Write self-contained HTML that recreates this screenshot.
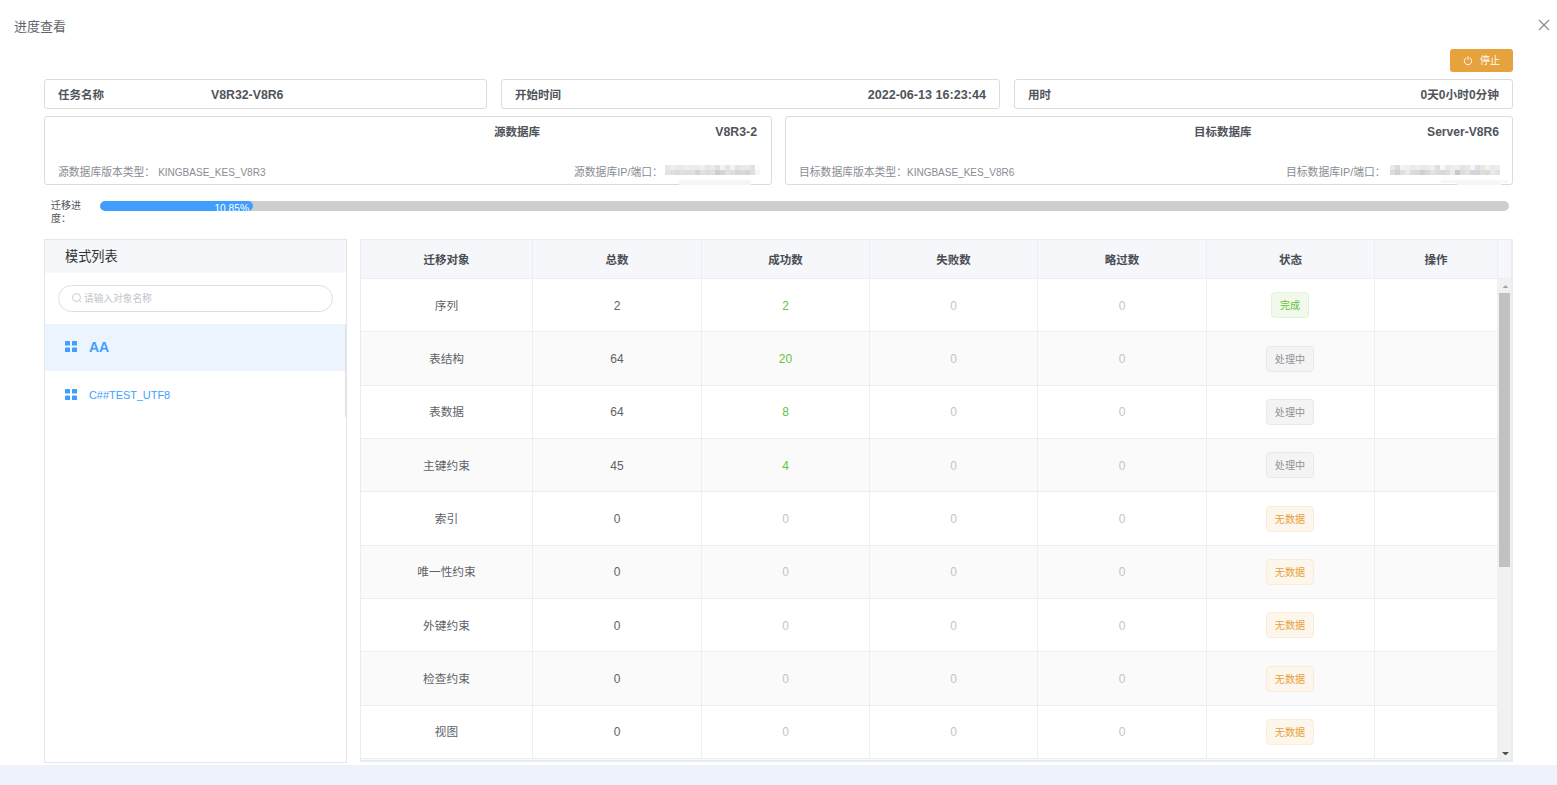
<!DOCTYPE html>
<html lang="zh-CN">
<head>
<meta charset="utf-8">
<title>进度查看</title>
<style>
*{box-sizing:border-box;margin:0;padding:0}
html,body{width:1557px;height:785px;overflow:hidden;background:#fff}
body{position:relative;font-family:"Liberation Sans","Noto Sans CJK SC",sans-serif;font-size:12px;color:#606266}
.abs{position:absolute}
.title{left:14px;top:17px;font-size:13px;line-height:19px;color:#62666c}
.close{left:1538px;top:19px;width:12px;height:12px}
.stop{left:1450px;top:49px;width:63px;height:23px;background:#e6a23c;border-radius:3px;color:#fff;font-size:10px;line-height:23px}
.stop svg{position:absolute;left:13.2px;top:6.8px}
.stop span{position:absolute;left:30px;top:0;font-size:10px;line-height:24px}
.box{border:1px solid #dcdcdc;border-radius:3px;background:#fff}
.b{font-weight:bold;color:#50545a}
.lbl{font-size:11.5px;line-height:16px;white-space:nowrap}
.val{font-size:11.7px;line-height:16px;white-space:nowrap}
.val i{font-style:normal;font-size:12.3px}
.sm{font-size:10.8px;line-height:14px;color:#888c92;white-space:nowrap}
.sm i{font-style:normal;font-size:10px}
.plabel{left:51px;top:199px;width:36px;font-size:10px;line-height:13px;color:#50545a}
.ptrack{left:100px;top:201px;width:1409px;height:10px;border-radius:5px;background:#cecece;overflow:hidden}
.pfill{position:absolute;left:0;top:0;width:153px;height:10px;border-radius:5px;background:#409eff;overflow:hidden}
.pfill span{position:absolute;right:4px;top:2px;font-size:10.2px;line-height:12px;color:#fff}
.panel{left:44px;top:239px;width:303px;height:524px;border:1px solid #e5e6e9;background:#fff}
.phead{position:absolute;left:0;top:0;width:301px;height:33px;background:#f5f7fa;font-size:13.2px;line-height:33px;padding-left:20px;color:#303133}
.search{position:absolute;left:13px;top:45px;width:275px;height:27px;border:1px solid #dcdfe6;border-radius:14px}
.search span{position:absolute;left:25px;top:6px;font-size:9.7px;line-height:14px;color:#c0c4cc}
.search svg{position:absolute;left:13px;top:7px}
.item{position:absolute;left:0;width:301px;height:47px;color:#409eff}
.item svg{position:absolute;left:20.4px;top:17px}
.item.i2 svg{top:18px}
.item span{position:absolute;left:44px;top:0;line-height:48px;white-space:nowrap;font-size:10.9px}
.item.on{background:#ecf5ff}
.item.on span{font-weight:bold;font-size:14px;line-height:47px}
.mborder{left:345px;top:324px;width:1px;height:93px;background:#e2e2e2}
.tbl{left:360px;top:239px;width:1153px;height:523px;border:1px solid #e9ecf3;border-right-width:2px;border-bottom-width:2px;background:#fff;overflow:hidden}
.th{position:absolute;left:0;top:0;width:1150px;height:39px;background:#f5f7fa;border-bottom:1px solid #ebeef5}
.th div{position:absolute;top:0;height:39px;line-height:40px;text-align:center;font-weight:bold;color:#4a4e54;border-right:1px solid #ebeef5;font-size:11.5px}
.tr{position:absolute;left:0;width:1136px;border-bottom:1px solid #ebeef5}
.tr.alt{background:#fafafa}
.tr div{position:absolute;top:0;height:100%;text-align:center;border-right:1px solid #ebeef5;font-size:11.7px;line-height:20px;color:#606266;padding-top:inherit}
.tr div i{font-style:normal;font-size:12px}
.tr div.g{color:#67c23a}
.tr div.z{color:#c0c4cc}
.tag{display:inline-block;height:26px;line-height:26px;padding:0 8px;font-size:10.1px;border-radius:4px;border:1px solid;vertical-align:top}
.t-ok{background:#f0f9eb;border-color:#e1f3d8;color:#67c23a}
.t-run{background:#f4f4f5;border-color:#e9e9eb;color:#909399}
.t-no{background:#fdf6ec;border-color:#faecd8;color:#e6a23c}
.sbar{position:absolute;left:1136px;top:39px;width:14px;height:481px;background:#f1f1f1}
.sthumb{position:absolute;left:2px;top:14px;width:11px;height:274px;background:#c1c1c1}
.footer{left:0;top:765px;width:1557px;height:20px;background:#eef2fb}
</style>
</head>
<body>
<div class="abs title">进度查看</div>
<svg class="abs close" viewBox="0 0 12 12"><path d="M1 1L11 11M11 1L1 11" stroke="#868a91" stroke-width="1.15" fill="none"/></svg>
<div class="abs stop"><svg width="10" height="10" viewBox="0 0 10 10"><path d="M3.15 1.8A3.7 3.7 0 1 0 6.85 1.8" stroke="#fff" stroke-width="0.95" fill="none"/><path d="M5 0.2V4" stroke="#fff" stroke-width="0.95"/></svg><span>停止</span></div>

<!-- info row 1 -->
<div class="abs box" style="left:44px;top:79px;width:443px;height:30px"></div>
<div class="abs box" style="left:501px;top:79px;width:499px;height:30px"></div>
<div class="abs box" style="left:1014px;top:79px;width:499px;height:30px"></div>
<div class="abs lbl b" style="left:58px;top:87px">任务名称</div>
<div class="abs val b" style="left:211px;top:87px"><i>V8R32-V8R6</i></div>
<div class="abs lbl b" style="left:515px;top:87px">开始时间</div>
<div class="abs val b" style="right:571px;top:87px"><i style="font-size:12.6px">2022-06-13 16:23:44</i></div>
<div class="abs lbl b" style="left:1028px;top:87px">用时</div>
<div class="abs val b" style="right:58px;top:87px"><i style="font-size:12px">0</i>天<i style="font-size:12px">0</i>小时<i style="font-size:12px">0</i>分钟</div>

<!-- info row 2 -->
<div class="abs box" style="left:44px;top:116px;width:728px;height:69px"></div>
<div class="abs box" style="left:785px;top:116px;width:728px;height:69px"></div>
<div class="abs lbl b" style="left:494px;top:124px">源数据库</div>
<div class="abs val b" style="right:800px;top:124px"><i>V8R3-2</i></div>
<div class="abs sm" style="left:58px;top:165px">源数据库版本类型： <i>KINGBASE_KES_V8R3</i></div>
<div class="abs sm" style="left:574px;top:165px">源数据库IP/端口：</div>
<svg class="abs" style="left:665px;top:165px" width="95" height="10" shape-rendering="crispEdges"><rect x="0" y="0" width="5" height="5" fill="#e9e8e8"/><rect x="5" y="0" width="5" height="5" fill="#ededed"/><rect x="10" y="0" width="5" height="5" fill="#e9ebeb"/><rect x="15" y="0" width="5" height="5" fill="#ebebeb"/><rect x="20" y="0" width="5" height="5" fill="#eeeeee"/><rect x="25" y="0" width="5" height="5" fill="#ebecec"/><rect x="30" y="0" width="5" height="5" fill="#eceaea"/><rect x="35" y="0" width="5" height="5" fill="#eef0f3"/><rect x="40" y="0" width="5" height="5" fill="#e6e6e8"/><rect x="45" y="0" width="5" height="5" fill="#ebeaea"/><rect x="50" y="0" width="5" height="5" fill="#dfe1e0"/><rect x="55" y="0" width="5" height="5" fill="#f3f3f3"/><rect x="60" y="0" width="5" height="5" fill="#e6e3e4"/><rect x="65" y="0" width="5" height="5" fill="#f4f3f1"/><rect x="70" y="0" width="5" height="5" fill="#e3e3e3"/><rect x="75" y="0" width="5" height="5" fill="#e8e9e9"/><rect x="80" y="0" width="5" height="5" fill="#ebeae6"/><rect x="85" y="0" width="5" height="5" fill="#e1e0e6"/><rect x="90" y="0" width="5" height="5" fill="#fafcfd"/><rect x="0" y="5" width="5" height="5" fill="#e5e2e0"/><rect x="5" y="5" width="5" height="5" fill="#dfe0df"/><rect x="10" y="5" width="5" height="5" fill="#dcdcdc"/><rect x="15" y="5" width="5" height="5" fill="#e1dfe0"/><rect x="20" y="5" width="5" height="5" fill="#dcdee0"/><rect x="25" y="5" width="5" height="5" fill="#dfdfdf"/><rect x="30" y="5" width="5" height="5" fill="#d3d3d3"/><rect x="35" y="5" width="5" height="5" fill="#dde2e8"/><rect x="40" y="5" width="5" height="5" fill="#dbdbdd"/><rect x="45" y="5" width="5" height="5" fill="#dfdfdf"/><rect x="50" y="5" width="5" height="5" fill="#cfcecc"/><rect x="55" y="5" width="5" height="5" fill="#d5d5d5"/><rect x="60" y="5" width="5" height="5" fill="#e3e1df"/><rect x="65" y="5" width="5" height="5" fill="#dadee2"/><rect x="70" y="5" width="5" height="5" fill="#d6d6d6"/><rect x="75" y="5" width="5" height="5" fill="#d9dadc"/><rect x="80" y="5" width="5" height="5" fill="#d6d5d3"/><rect x="85" y="5" width="5" height="5" fill="#e1dedd"/><rect x="90" y="5" width="5" height="5" fill="#f0f6fa"/></svg><div class="abs" style="left:679px;top:180px;width:72px;height:5px;background:#f6f6f6"></div>
<div class="abs lbl b" style="left:1194px;top:124px">目标数据库</div>
<div class="abs val b" style="right:58px;top:124px"><i style="font-size:12.1px">Server-V8R6</i></div>
<div class="abs sm" style="left:799px;top:165px">目标数据库版本类型：<i>KINGBASE_KES_V8R6</i></div>
<div class="abs sm" style="left:1286px;top:165px">目标数据库IP/端口：</div>
<svg class="abs" style="left:1390px;top:165px" width="110" height="10" shape-rendering="crispEdges"><rect x="0" y="0" width="5" height="5" fill="#e8e8e6"/><rect x="5" y="0" width="5" height="5" fill="#d9dade"/><rect x="10" y="0" width="5" height="5" fill="#f3f3ef"/><rect x="15" y="0" width="5" height="5" fill="#eef0f4"/><rect x="20" y="0" width="5" height="5" fill="#ebebeb"/><rect x="25" y="0" width="5" height="5" fill="#ededec"/><rect x="30" y="0" width="5" height="5" fill="#e9e9e9"/><rect x="35" y="0" width="5" height="5" fill="#eaebee"/><rect x="40" y="0" width="5" height="5" fill="#f1eeeb"/><rect x="45" y="0" width="5" height="5" fill="#dfdfe4"/><rect x="50" y="0" width="5" height="5" fill="#f8f8fb"/><rect x="55" y="0" width="5" height="5" fill="#e9e9e9"/><rect x="60" y="0" width="5" height="5" fill="#eceeed"/><rect x="65" y="0" width="5" height="5" fill="#eeedeb"/><rect x="70" y="0" width="5" height="5" fill="#e3e4e7"/><rect x="75" y="0" width="5" height="5" fill="#e7e7e7"/><rect x="80" y="0" width="5" height="5" fill="#f4f5f8"/><rect x="85" y="0" width="5" height="5" fill="#dfe0e4"/><rect x="90" y="0" width="5" height="5" fill="#e9e7e5"/><rect x="95" y="0" width="5" height="5" fill="#f2f2ef"/><rect x="100" y="0" width="5" height="5" fill="#e8e8e8"/><rect x="105" y="0" width="5" height="5" fill="#e9eef2"/><rect x="0" y="5" width="5" height="5" fill="#d9dcdb"/><rect x="5" y="5" width="5" height="5" fill="#d3d0d2"/><rect x="10" y="5" width="5" height="5" fill="#e1dfdb"/><rect x="15" y="5" width="5" height="5" fill="#e6ebef"/><rect x="20" y="5" width="5" height="5" fill="#dcdcda"/><rect x="25" y="5" width="5" height="5" fill="#d9d9d8"/><rect x="30" y="5" width="5" height="5" fill="#d1cfce"/><rect x="35" y="5" width="5" height="5" fill="#d6d8dc"/><rect x="40" y="5" width="5" height="5" fill="#e3e2de"/><rect x="45" y="5" width="5" height="5" fill="#dbdbe0"/><rect x="50" y="5" width="5" height="5" fill="#d9d9dc"/><rect x="55" y="5" width="5" height="5" fill="#dddddd"/><rect x="60" y="5" width="5" height="5" fill="#ebebeb"/><rect x="65" y="5" width="5" height="5" fill="#cbc9c8"/><rect x="70" y="5" width="5" height="5" fill="#d6dee2"/><rect x="75" y="5" width="5" height="5" fill="#e3e2df"/><rect x="80" y="5" width="5" height="5" fill="#d6d6d6"/><rect x="85" y="5" width="5" height="5" fill="#d3d6db"/><rect x="90" y="5" width="5" height="5" fill="#e1dcda"/><rect x="95" y="5" width="5" height="5" fill="#dadada"/><rect x="100" y="5" width="5" height="5" fill="#e9e9e7"/><rect x="105" y="5" width="5" height="5" fill="#dde3e8"/></svg><div class="abs" style="left:1441px;top:180px;width:67px;height:3px;background:#f7f7f7"></div><div class="abs" style="left:1457px;top:183px;width:44px;height:2px;background:#f6f6f6"></div>

<!-- progress -->
<div class="abs plabel">迁移进度：</div>
<div class="abs ptrack"><div class="pfill"><span>10.85%</span></div></div>

<!-- left panel -->
<div class="abs panel">
  <div class="phead">模式列表</div>
  <div class="search"><svg width="10" height="10" viewBox="0 0 10 10"><circle cx="4.5" cy="4.5" r="4" stroke="#c0c4cc" stroke-width="0.9" fill="none"/><path d="M7.4 7.4L9.2 9.2" stroke="#c0c4cc" stroke-width="0.9"/></svg><span>请输入对象名称</span></div>
  <div class="item on" style="top:84px"><svg width="12" height="11" preserveAspectRatio="none" viewBox="0 0 12 12"><rect x="0" y="0" width="5" height="5" rx="0.6" fill="#409eff"/><rect x="7" y="0" width="5" height="5" rx="0.6" fill="#409eff"/><rect x="0" y="7" width="5" height="5" rx="0.6" fill="#409eff"/><rect x="7" y="7" width="5" height="5" rx="0.6" fill="#409eff"/></svg><span>AA</span></div>
  <div class="item i2" style="top:131px"><svg width="12" height="11" preserveAspectRatio="none" viewBox="0 0 12 12"><rect x="0" y="0" width="5" height="5" rx="0.6" fill="#409eff"/><rect x="7" y="0" width="5" height="5" rx="0.6" fill="#409eff"/><rect x="0" y="7" width="5" height="5" rx="0.6" fill="#409eff"/><rect x="7" y="7" width="5" height="5" rx="0.6" fill="#409eff"/></svg><span>C##TEST_UTF8</span></div>
</div>
<div class="abs mborder"></div>

<!-- table -->
<div class="abs tbl" id="tbl">
<div class="th">
<div style="left:0px;width:172px">迁移对象</div>
<div style="left:172px;width:169px">总数</div>
<div style="left:341px;width:168px">成功数</div>
<div style="left:509px;width:168px">失败数</div>
<div style="left:677px;width:169px">略过数</div>
<div style="left:846px;width:168px">状态</div>
<div style="left:1014px;width:123px">操作</div>
<div style="left:1137px;width:14px;border-right:0"></div>
</div>
<div class="tr" style="top:39px;height:53px;padding-top:17px">
<div style="left:0px;width:172px">序列</div>
<div style="left:172px;width:169px"><i>2</i></div>
<div class="g" style="left:341px;width:168px"><i>2</i></div>
<div class="z" style="left:509px;width:168px"><i>0</i></div>
<div class="z" style="left:677px;width:169px"><i>0</i></div>
<div style="left:846px;width:168px;padding-top:13px;padding-right:1px;line-height:0"><span class="tag t-ok">完成</span></div>
<div style="left:1014px;width:123px"></div>
</div>
<div class="tr alt" style="top:92px;height:54px;padding-top:17px">
<div style="left:0px;width:172px">表结构</div>
<div style="left:172px;width:169px"><i>64</i></div>
<div class="g" style="left:341px;width:168px"><i>20</i></div>
<div class="z" style="left:509px;width:168px"><i>0</i></div>
<div class="z" style="left:677px;width:169px"><i>0</i></div>
<div style="left:846px;width:168px;padding-top:14px;padding-right:1px;line-height:0"><span class="tag t-run">处理中</span></div>
<div style="left:1014px;width:123px"></div>
</div>
<div class="tr" style="top:146px;height:53px;padding-top:16px">
<div style="left:0px;width:172px">表数据</div>
<div style="left:172px;width:169px"><i>64</i></div>
<div class="g" style="left:341px;width:168px"><i>8</i></div>
<div class="z" style="left:509px;width:168px"><i>0</i></div>
<div class="z" style="left:677px;width:169px"><i>0</i></div>
<div style="left:846px;width:168px;padding-top:13px;padding-right:1px;line-height:0"><span class="tag t-run">处理中</span></div>
<div style="left:1014px;width:123px"></div>
</div>
<div class="tr alt" style="top:199px;height:53px;padding-top:17px">
<div style="left:0px;width:172px">主键约束</div>
<div style="left:172px;width:169px"><i>45</i></div>
<div class="g" style="left:341px;width:168px"><i>4</i></div>
<div class="z" style="left:509px;width:168px"><i>0</i></div>
<div class="z" style="left:677px;width:169px"><i>0</i></div>
<div style="left:846px;width:168px;padding-top:13px;padding-right:1px;line-height:0"><span class="tag t-run">处理中</span></div>
<div style="left:1014px;width:123px"></div>
</div>
<div class="tr" style="top:252px;height:54px;padding-top:17px">
<div style="left:0px;width:172px">索引</div>
<div style="left:172px;width:169px"><i>0</i></div>
<div class="z" style="left:341px;width:168px"><i>0</i></div>
<div class="z" style="left:509px;width:168px"><i>0</i></div>
<div class="z" style="left:677px;width:169px"><i>0</i></div>
<div style="left:846px;width:168px;padding-top:14px;padding-right:1px;line-height:0"><span class="tag t-no">无数据</span></div>
<div style="left:1014px;width:123px"></div>
</div>
<div class="tr alt" style="top:306px;height:53px;padding-top:16px">
<div style="left:0px;width:172px">唯一性约束</div>
<div style="left:172px;width:169px"><i>0</i></div>
<div class="z" style="left:341px;width:168px"><i>0</i></div>
<div class="z" style="left:509px;width:168px"><i>0</i></div>
<div class="z" style="left:677px;width:169px"><i>0</i></div>
<div style="left:846px;width:168px;padding-top:13px;padding-right:1px;line-height:0"><span class="tag t-no">无数据</span></div>
<div style="left:1014px;width:123px"></div>
</div>
<div class="tr" style="top:359px;height:53px;padding-top:17px">
<div style="left:0px;width:172px">外键约束</div>
<div style="left:172px;width:169px"><i>0</i></div>
<div class="z" style="left:341px;width:168px"><i>0</i></div>
<div class="z" style="left:509px;width:168px"><i>0</i></div>
<div class="z" style="left:677px;width:169px"><i>0</i></div>
<div style="left:846px;width:168px;padding-top:13px;padding-right:1px;line-height:0"><span class="tag t-no">无数据</span></div>
<div style="left:1014px;width:123px"></div>
</div>
<div class="tr alt" style="top:412px;height:54px;padding-top:17px">
<div style="left:0px;width:172px">检查约束</div>
<div style="left:172px;width:169px"><i>0</i></div>
<div class="z" style="left:341px;width:168px"><i>0</i></div>
<div class="z" style="left:509px;width:168px"><i>0</i></div>
<div class="z" style="left:677px;width:169px"><i>0</i></div>
<div style="left:846px;width:168px;padding-top:14px;padding-right:1px;line-height:0"><span class="tag t-no">无数据</span></div>
<div style="left:1014px;width:123px"></div>
</div>
<div class="tr" style="top:466px;height:53px;padding-top:16px">
<div style="left:0px;width:172px">视图</div>
<div style="left:172px;width:169px"><i>0</i></div>
<div class="z" style="left:341px;width:168px"><i>0</i></div>
<div class="z" style="left:509px;width:168px"><i>0</i></div>
<div class="z" style="left:677px;width:169px"><i>0</i></div>
<div style="left:846px;width:168px;padding-top:13px;padding-right:1px;line-height:0"><span class="tag t-no">无数据</span></div>
<div style="left:1014px;width:123px"></div>
</div>
<div class="tr alt" style="top:519px;height:10px;border-bottom:0"></div>
<div class="sbar"><svg style="position:absolute;left:4.5px;top:5.5px" width="7" height="3.7" viewBox="0 0 7 3.7"><path d="M0 3.7L3.5 0L7 3.7Z" fill="#a3a3a3"/></svg><div class="sthumb"></div><svg style="position:absolute;left:4.5px;top:472.8px" width="7" height="3.6" viewBox="0 0 7 3.6"><path d="M0 0H7L3.5 3.6Z" fill="#505050"/></svg></div>
</div>

<div class="abs footer"></div>
</body>
</html>
